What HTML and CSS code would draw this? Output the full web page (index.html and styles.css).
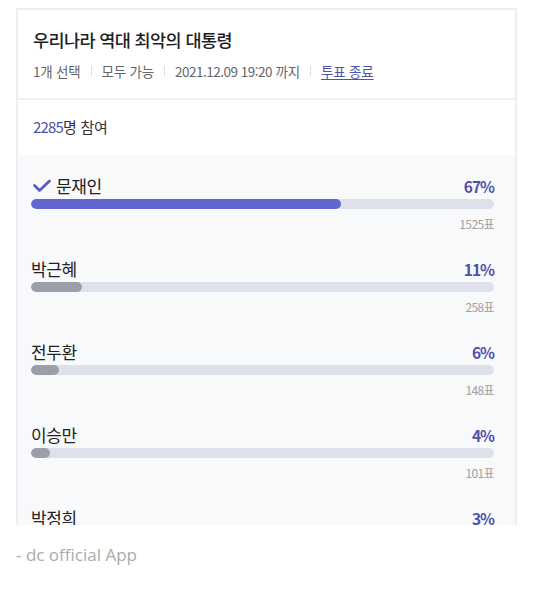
FILE: index.html
```html
<!DOCTYPE html>
<html lang="ko">
<head>
<meta charset="utf-8">
<link rel="stylesheet" href="styles.css">
</head>
<body>
<div class="page">
  <div class="card">
    <div class="head">
      <div class="title">우리나라 역대 최악의 대통령</div>
      <div class="meta">
        <span>1개 선택</span><i class="sep"></i>
        <span>모두 가능</span><i class="sep"></i>
        <span class="num">2021.12.09 19:20</span>&nbsp;<span>까지</span><i class="sep"></i>
        <a class="link" href="#">투표 종료</a>
      </div>
    </div>
    <div class="count"><span class="cnum">2285</span>명 참여</div>
    <div class="options">
      <div class="opt">
        <div class="row">
          <span class="name"><svg class="check" width="20" height="14" viewBox="0 0 20 14"><path d="M2.5 6.5 L7.5 11.5 L17.5 2" fill="none" stroke="#5a5cb8" stroke-width="2.8" stroke-linecap="round" stroke-linejoin="round"/></svg>문재인</span>
          <span class="pct">67%</span>
        </div>
        <div class="bar"><div class="fill mine" style="width:67%"></div></div>
        <div class="votes">1525표</div>
      </div>
      <div class="opt">
        <div class="row"><span class="name">박근혜</span><span class="pct">11%</span></div>
        <div class="bar"><div class="fill" style="width:11%"></div></div>
        <div class="votes">258표</div>
      </div>
      <div class="opt">
        <div class="row"><span class="name">전두환</span><span class="pct">6%</span></div>
        <div class="bar"><div class="fill" style="width:6%"></div></div>
        <div class="votes">148표</div>
      </div>
      <div class="opt">
        <div class="row"><span class="name">이승만</span><span class="pct">4%</span></div>
        <div class="bar"><div class="fill" style="width:4%"></div></div>
        <div class="votes">101표</div>
      </div>
      <div class="opt">
        <div class="row"><span class="name">박정희</span><span class="pct">3%</span></div>
        <div class="bar"><div class="fill" style="width:3%"></div></div>
        <div class="votes">70표</div>
      </div>
    </div>
  </div>
  <div class="footer">- dc official App</div>
</div>
</body>
</html>
```
FILE: styles.css
```css
html, body { margin: 0; padding: 0; background: #fff; }
body { font-family: "Noto Sans CJK KR", "Noto Sans", sans-serif; color: #222; }
.page { padding: 8px 16px 0 16px; }
.card {
  border: 2px solid #eceef2;
  border-bottom: none;
  height: 517px;
  box-sizing: border-box;
  overflow: hidden;
  background: #fff;
}
.head { padding: 17px 15px 17px 15px; border-bottom: 2px solid #eef0f3; }
.title { font-size: 17.5px; line-height: 26px; font-weight: 500; letter-spacing: -0.6px; color: #1e1e1e; }
.meta { margin-top: 8px; font-size: 13.5px; line-height: 20px; color: #666; display: flex; align-items: center; letter-spacing: -0.2px; }
.meta .num { letter-spacing: -0.5px; }
.sep { display: inline-block; width: 1px; height: 10px; background: #dcdcdc; margin: 0 10px; }
.link { color: #4a55a8; text-decoration: underline; text-underline-offset: 2px; }
.count { padding: 17px 15px 18px; font-size: 15px; line-height: 20px; color: #333; letter-spacing: -0.3px; }
.cnum { color: #4d4fa8; letter-spacing: -0.8px; }
.options { background: #f8f9fb; padding: 20px 21px 0 13px; }
.opt { margin-bottom: 26px; }
.row { display: flex; justify-content: space-between; align-items: center; height: 22px; }
.name { font-size: 17px; line-height: 22px; color: #222; display: flex; align-items: center; letter-spacing: -0.4px; }
.check { margin: 0 4px 0 1px; }
.pct { font-size: 15.5px; font-weight: 700; color: #4f50a8; letter-spacing: -1px; }
.bar { margin-top: 2px; height: 10px; border-radius: 5px; background: #dfe1ea; overflow: hidden; }
.fill { height: 100%; border-radius: 5px; background: #9c9ea8; }
.fill.mine { background: #6265d2; }
.votes { margin-top: 7px; text-align: right; font-size: 12px; line-height: 16px; color: #a0a0a0; letter-spacing: -0.6px; }
.footer { margin-top: 18px; font-family: "Open Sans", "Noto Sans", sans-serif; font-size: 17px; line-height: 24px; color: #ababab; }
```
